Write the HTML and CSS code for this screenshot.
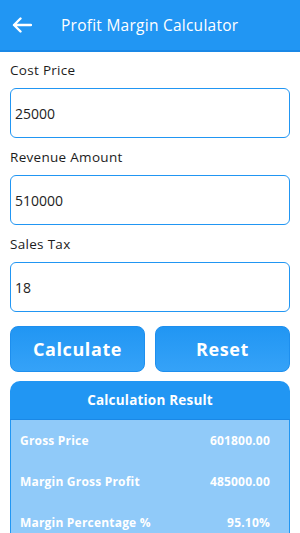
FILE: index.html
```html
<!DOCTYPE html>
<html lang="en">
<head>
    <meta charset="UTF-8">
    <meta name="viewport" content="width=device-width, initial-scale=1.0">
    <title>Profit Margin Calculator</title>
    <link rel="stylesheet" href="styles.css">
</head>
<body>
    <!-- top bar -->
    <header class="app-bar">
        <button class="back-button" aria-label="Back">
            <svg width="20" height="16" viewBox="0 0 20 16">
                <path d="M19 8H2M8.5 1.5L2 8l6.5 6.5" fill="none" stroke="#fff" stroke-width="2.4" stroke-linecap="round" stroke-linejoin="round"/>
            </svg>
        </button>
        <h1 class="app-title">Profit Margin Calculator</h1>
    </header>

    <main class="content">
        <label class="field-label" for="cost">Cost Price</label>
        <input id="cost" class="field-input" type="text" value="25000">

        <label class="field-label" for="revenue">Revenue Amount</label>
        <input id="revenue" class="field-input" type="text" value="510000">

        <label class="field-label" for="tax">Sales Tax</label>
        <input id="tax" class="field-input" type="text" value="18">

        <div class="button-row">
            <button class="blue-button">Calculate</button>
            <button class="blue-button">Reset</button>
        </div>

        <!-- result card -->
        <section class="result-card">
            <h2 class="result-title">Calculation Result</h2>
            <div class="result-body">
                <div class="result-row"><span>Gross Price</span><span>601800.00</span></div>
                <div class="result-row"><span>Margin Gross Profit</span><span>485000.00</span></div>
                <div class="result-row"><span>Margin Percentage %</span><span>95.10%</span></div>
            </div>
        </section>
    </main>
</body>
</html>
```

FILE: styles.css
```css
body {
    margin: 0;
    font-family: 'Open Sans', 'Liberation Sans', sans-serif;
    background: #fff;
    color: #1c1c1c;
    overflow: hidden;
}

/* 상단 바 */
.app-bar {
    height: 52px;
    background-color: #2196f3;
    border-bottom: 2px solid #1a88e6;
    box-sizing: border-box;
    display: flex;
    align-items: center;
    padding-left: 12px;
}
.back-button {
    background: none;
    border: none;
    padding: 0;
    width: 22px;
    height: 16px;
    display: flex;
    align-items: center;
    cursor: pointer;
}
.app-title {
    margin: 0 0 0 27px;
    color: #fff;
    font-size: 15.5px;
    font-weight: 500;
    letter-spacing: 0.25px;
}

.content {
    padding: 8px 10px 0;
    display: flex;
    flex-direction: column;
}

.field-label {
    font-size: 13.5px;
    line-height: 18px;
    letter-spacing: 0.3px;
    margin: 1px 0 9px;
}

.field-input {
    height: 50px;
    box-sizing: border-box;
    border: 1.5px solid #2196f3;
    border-radius: 6px;
    padding: 0 4px;
    font-family: inherit;
    font-size: 14px;
    color: #222;
    margin-bottom: 9px;
    outline: none;
}

.button-row {
    display: flex;
    gap: 10px;
    margin-top: 5px;
}
.blue-button {
    flex: 1;
    height: 46px;
    border: 1px solid #1e8fee;
    border-radius: 8px;
    background-image: linear-gradient(to bottom, #2196f3, #35a2f8);
    color: #fff;
    font-family: inherit;
    font-size: 18px;
    font-weight: 700;
    letter-spacing: 0.6px;
    cursor: pointer;
}

/* 결과 카드 */
.result-card {
    margin-top: 9px;
    border-radius: 10px 10px 0 0;
    overflow: hidden;
}
.result-title {
    margin: 0;
    height: 39px;
    background-color: #2196f3;
    border-bottom: 1px solid #1a88e6;
    box-sizing: border-box;
    color: #fff;
    font-size: 13.5px;
    font-weight: 700;
    letter-spacing: 0.2px;
    display: flex;
    align-items: center;
    justify-content: center;
}
.result-body {
    background-color: #90caf9;
    border: 1.5px solid #2196f3;
    border-top: none;
    padding: 0 19px 0 9px;
    height: 113px;
    overflow: hidden;
}
.result-row {
    display: flex;
    justify-content: space-between;
    height: 41px;
    align-items: center;
    color: #fff;
    font-size: 12px;
    font-weight: 700;
    letter-spacing: 0.2px;
}
```
